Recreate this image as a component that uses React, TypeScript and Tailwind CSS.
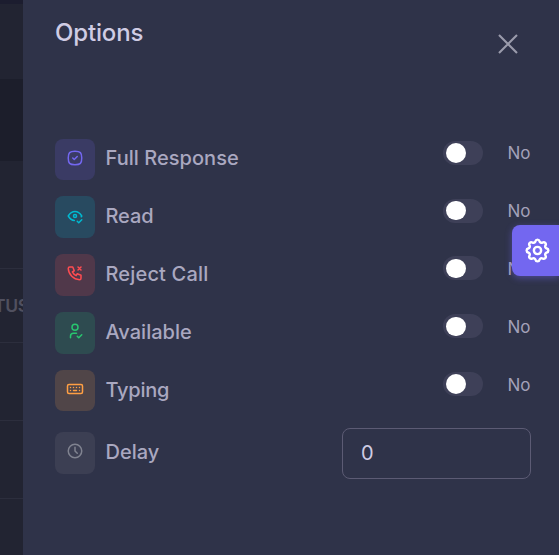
import { useState } from "react";
import type { IconType } from "react-icons";
import {
  TbClock,
  TbEyeCheck,
  TbKeyboard,
  TbPhoneX,
  TbSettings,
  TbSquareRoundedCheck,
  TbUserCheck,
} from "react-icons/tb";
import clsx from "clsx";

interface Option {
  id: string;
  label: string;
  icon: IconType;
  tile: string;
  text: string;
}

const OPTIONS: Option[] = [
  { id: "full", label: "Full Response", icon: TbSquareRoundedCheck, tile: "bg-[#3a3b64] text-[#7367f0]", text: "tracking-[0.04px]" },
  { id: "read", label: "Read", icon: TbEyeCheck, tile: "bg-[#284a60] text-[#00bad1]", text: "tracking-[-0.1px]" },
  { id: "reject", label: "Reject Call", icon: TbPhoneX, tile: "bg-[#50384a] text-[#ff4c51]", text: "tracking-[0.17px]" },
  { id: "available", label: "Available", icon: TbUserCheck, tile: "bg-[#2e4b50] text-[#28c76f]", text: "tracking-[0.02px]" },
  { id: "typing", label: "Typing", icon: TbKeyboard, tile: "bg-[#504548] text-[#ff9f43]", text: "tracking-[-0.25px]" },
];

function IconTile({ icon: Icon, className }: { icon: IconType; className: string }) {
  return (
    <span className={clsx("flex h-[41.5px] w-10 shrink-0 items-center justify-center rounded-lg", className)}>
      <Icon className="-mt-[3px] size-[18px]" strokeWidth={2} />
    </span>
  );
}

function OptionRow({ option }: { option: Option }) {
  const [on, setOn] = useState(false);

  return (
    <div className="flex h-[41.85px] items-center">
      <IconTile icon={option.icon} className={option.tile} />
      <span className={clsx("ml-[10.5px] mb-[2px] flex-1 text-[20px] leading-7 font-medium text-[#aaa8c0]", option.text)}>
        {option.label}
      </span>
      <button
        type="button"
        role="switch"
        aria-checked={on}
        aria-label={option.label}
        onClick={() => setOn(!on)}
        className="mb-[13px] flex h-6 w-10 items-center rounded-full bg-[#3e4058] px-[3px]"
      >
        <span className={clsx("size-[19.5px] rounded-full bg-white", on && "ml-auto")} />
      </button>
      <span className="mb-[12px] w-12 pl-[24.5px] text-[17px] leading-6 text-[#a3a1b8]">{on ? "Yes" : "No"}</span>
    </div>
  );
}

export default function App() {
  const [delay, setDelay] = useState("0");

  return (
    <div className="relative flex h-[555px] w-[559px] overflow-hidden bg-[#1c1e2c] font-['Inter','Liberation_Sans',sans-serif]">
      {/* Table behind the drawer */}
      <div className="flex w-[23px] shrink-0 flex-col bg-[#222432]">
        <div className="h-1 bg-[#1c1d2f]" />
        <div className="h-[75px]" />
        <div className="h-[82px] bg-[#1c1e2b]" />
        <div className="h-[108px] border-b border-[#2c2e3d]" />
        <div className="flex h-[74px] items-center border-b border-[#2c2e3d] text-[17.5px] font-semibold text-[#50505f]">
          <span className="-ml-[6px] mt-[2px] tracking-[-0.3px]">TUS</span>
        </div>
        <div className="h-[78px] border-b border-[#2c2e3d]" />
        <div className="h-[78px] border-b border-[#2c2e3d]" />
      </div>

      {/* Drawer */}
      <div className="relative flex-1 bg-[#2f3349] pr-7 pl-8">
        <div className="flex h-[138.35px] justify-between">
          <h5 className="mt-[17px] text-[24px] leading-8 font-medium tracking-[-0.15px] text-[#cfcce4]">Options</h5>
          <button type="button" aria-label="Close" className="mt-[34px] mr-[13px] size-5 text-[#9a9bab]">
            <svg viewBox="0 0 20 20" className="size-5" fill="none" stroke="currentColor" strokeWidth="2.1">
              <path d="M1 1L19 19M19 1L1 19" />
            </svg>
          </button>
        </div>

        <div className="flex flex-col gap-4">
          {OPTIONS.map((option) => (
            <OptionRow key={option.id} option={option} />
          ))}
        </div>

        <div className="mt-[16.4px] flex h-[51px] items-center">
          <IconTile icon={TbClock} className="-mt-[1px] bg-[#3c3f53] text-[#808390]" />
          <span className="ml-[10.5px] -mt-[3px] flex-1 text-[20px] leading-7 font-medium text-[#aaa8c0]">
            Delay
          </span>
          <input
            value={delay}
            onChange={(e) => setDelay(e.target.value)}
            className="h-[51px] w-[189px] rounded-lg border border-[#5c5b74] bg-transparent px-[18px] text-[20px] text-[#cfcce4] outline-none"
          />
        </div>
      </div>

      {/* Floating customizer button */}
      <button
        type="button"
        aria-label="Settings"
        className="absolute top-[225px] right-0 flex h-[51px] w-[47px] items-center justify-center rounded-l-lg bg-[#7367f0] pl-1 text-white shadow-[0_2px_7px_rgba(115,103,240,0.45)]"
      >
        <TbSettings className="size-[29px]" />
      </button>
    </div>
  );
}
